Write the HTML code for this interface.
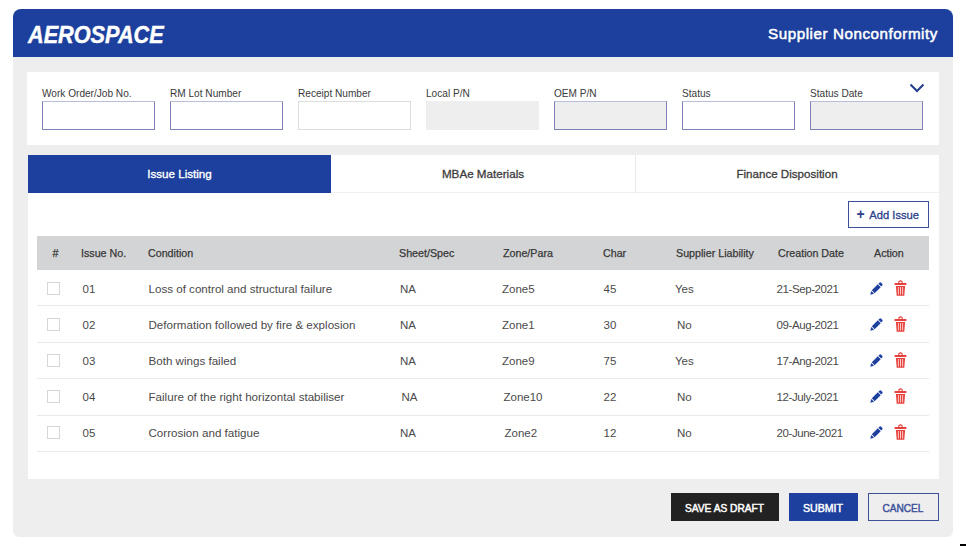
<!DOCTYPE html>
<html><head><meta charset="utf-8"><style>
html,body{margin:0;padding:0;width:966px;height:546px;overflow:hidden;background:#ffffff}
body{position:relative;font-family:"Liberation Sans",sans-serif}
.t{position:absolute;white-space:nowrap;line-height:1;-webkit-font-smoothing:antialiased}
</style></head><body>
<div style="position:absolute;left:13px;top:8.5px;width:940px;height:528.5px;background:#eeeeee;border-radius:8px 8px 6px 6px;overflow:hidden"><div style="position:absolute;left:0;top:0;width:940px;height:48px;background:#1d3f9d"></div></div>
<div class="t" style="left:27.6px;top:24.00px;font-size:23px;color:#ffffff;font-weight:bold;font-style:italic;letter-spacing:0px;-webkit-text-stroke:0.4px #fff;transform:scaleX(0.942);transform-origin:0 0;">AEROSPACE</div>
<div class="t" style="left:768px;top:26.00px;font-size:15.2px;color:#ffffff;font-weight:normal;font-style:normal;letter-spacing:0.55px;-webkit-text-stroke:0.5px #fff;">Supplier Nonconformity</div>
<div style="position:absolute;left:27px;top:72px;width:912px;height:73px;background:#ffffff"></div>
<div class="t" style="left:42px;top:89.00px;font-size:10.1px;color:#3a3a3a;font-weight:normal;font-style:normal;letter-spacing:0px;">Work Order/Job No.</div>
<div style="position:absolute;left:42px;top:101px;width:111px;height:27px;background:#fff;border:1px solid #7c82b4;border-top-color:#b9bedc"></div>
<div class="t" style="left:170px;top:89.00px;font-size:10.1px;color:#3a3a3a;font-weight:normal;font-style:normal;letter-spacing:0px;">RM Lot Number</div>
<div style="position:absolute;left:170px;top:101px;width:111px;height:27px;background:#fff;border:1px solid #7c82b4;border-top-color:#b9bedc"></div>
<div class="t" style="left:298px;top:89.00px;font-size:10.1px;color:#3a3a3a;font-weight:normal;font-style:normal;letter-spacing:0px;">Receipt Number</div>
<div style="position:absolute;left:298px;top:101px;width:111px;height:27px;background:#fff;border:1px solid #dddddd"></div>
<div class="t" style="left:426px;top:89.00px;font-size:10.1px;color:#3a3a3a;font-weight:normal;font-style:normal;letter-spacing:0px;">Local P/N</div>
<div style="position:absolute;left:426px;top:101px;width:111px;height:27px;background:#eeeeee;border:1px solid #eeeeee"></div>
<div class="t" style="left:554px;top:89.00px;font-size:10.1px;color:#3a3a3a;font-weight:normal;font-style:normal;letter-spacing:0px;">OEM P/N</div>
<div style="position:absolute;left:554px;top:101px;width:111px;height:27px;background:#eeeeee;border:1px solid #7c82b4;border-top-color:#b9bedc"></div>
<div class="t" style="left:682px;top:89.00px;font-size:10.1px;color:#3a3a3a;font-weight:normal;font-style:normal;letter-spacing:0px;">Status</div>
<div style="position:absolute;left:682px;top:101px;width:111px;height:27px;background:#fff;border:1px solid #7c82b4;border-top-color:#b9bedc"></div>
<div class="t" style="left:810px;top:89.00px;font-size:10.1px;color:#3a3a3a;font-weight:normal;font-style:normal;letter-spacing:0px;">Status Date</div>
<div style="position:absolute;left:810px;top:101px;width:111px;height:27px;background:#eeeeee;border:1px solid #7c82b4;border-top-color:#b9bedc"></div>
<svg style="position:absolute;left:909px;top:82px" width="16" height="12" viewBox="0 0 16 12"><path d="M1.5 2.5 L8 9 L14.5 2.5" fill="none" stroke="#1f3d8a" stroke-width="2"/></svg>
<div style="position:absolute;left:28px;top:155px;width:911px;height:323.5px;background:#ffffff"></div>
<div style="position:absolute;left:28px;top:155px;width:303px;height:38px;background:#1d3f9d"></div>
<div style="position:absolute;left:331px;top:192px;width:608px;height:1px;background:#f0f0f0"></div>
<div style="position:absolute;left:635px;top:155px;width:1px;height:38px;background:#eaeaea"></div>
<div class="t" style="left:29.5px;top:168.00px;font-size:11.6px;color:#ffffff;font-weight:normal;font-style:normal;letter-spacing:0px;width:300px;text-align:center;-webkit-text-stroke:0.35px #fff;">Issue Listing</div>
<div class="t" style="left:333.0px;top:168.00px;font-size:11.65px;color:#3c3c3c;font-weight:normal;font-style:normal;letter-spacing:0px;width:300px;text-align:center;-webkit-text-stroke:0.3px #3c3c3c;">MBAe Materials</div>
<div class="t" style="left:637.0px;top:168.00px;font-size:11.6px;color:#3c3c3c;font-weight:normal;font-style:normal;letter-spacing:0px;width:300px;text-align:center;-webkit-text-stroke:0.3px #3c3c3c;">Finance Disposition</div>
<div style="position:absolute;left:848px;top:201px;width:79px;height:25px;border:1px solid #3b4f9a"></div>
<div class="t" style="left:856.6px;top:207.00px;font-size:14px;color:#2b3f8c;font-weight:bold;font-style:normal;letter-spacing:0px;">+</div>
<div class="t" style="left:869.3px;top:210.00px;font-size:11.2px;color:#2b3f8c;font-weight:normal;font-style:normal;letter-spacing:0px;-webkit-text-stroke:0.3px #2b3f8c;">Add Issue</div>
<div style="position:absolute;left:37px;top:236px;width:892px;height:34px;background:#d3d4d5"></div>
<div class="t" style="left:52.6px;top:248.00px;font-size:10.7px;color:#383838;font-weight:normal;font-style:normal;letter-spacing:0px;-webkit-text-stroke:0.25px #383838;">#</div>
<div class="t" style="left:81px;top:248.00px;font-size:10.7px;color:#383838;font-weight:normal;font-style:normal;letter-spacing:0px;-webkit-text-stroke:0.25px #383838;">Issue No.</div>
<div class="t" style="left:148px;top:248.00px;font-size:10.7px;color:#383838;font-weight:normal;font-style:normal;letter-spacing:0px;-webkit-text-stroke:0.25px #383838;">Condition</div>
<div class="t" style="left:399px;top:248.00px;font-size:10.7px;color:#383838;font-weight:normal;font-style:normal;letter-spacing:0px;-webkit-text-stroke:0.25px #383838;">Sheet/Spec</div>
<div class="t" style="left:503px;top:248.00px;font-size:10.7px;color:#383838;font-weight:normal;font-style:normal;letter-spacing:0px;-webkit-text-stroke:0.25px #383838;">Zone/Para</div>
<div class="t" style="left:603px;top:248.00px;font-size:10.7px;color:#383838;font-weight:normal;font-style:normal;letter-spacing:0px;-webkit-text-stroke:0.25px #383838;">Char</div>
<div class="t" style="left:676px;top:248.00px;font-size:10.7px;color:#383838;font-weight:normal;font-style:normal;letter-spacing:0px;-webkit-text-stroke:0.25px #383838;">Supplier Liability</div>
<div class="t" style="left:778px;top:248.00px;font-size:10.7px;color:#383838;font-weight:normal;font-style:normal;letter-spacing:0px;-webkit-text-stroke:0.25px #383838;">Creation Date</div>
<div class="t" style="left:874px;top:248.00px;font-size:10.7px;color:#383838;font-weight:normal;font-style:normal;letter-spacing:0px;-webkit-text-stroke:0.25px #383838;">Action</div>
<div style="position:absolute;left:37px;top:305px;width:892px;height:1px;background:#e9e9e9"></div>
<div style="position:absolute;left:47px;top:282.00px;width:11px;height:11px;border:1px solid #d6d6d6;background:#fff"></div>
<div class="t" style="left:82.5px;top:284.00px;font-size:11.5px;color:#4a4a4a;font-weight:normal;font-style:normal;letter-spacing:0px;">01</div>
<div class="t" style="left:148.5px;top:283.00px;font-size:11.6px;color:#4a4a4a;font-weight:normal;font-style:normal;letter-spacing:0px;">Loss of control and structural failure</div>
<div class="t" style="left:400px;top:284.00px;font-size:11.5px;color:#4a4a4a;font-weight:normal;font-style:normal;letter-spacing:0px;">NA</div>
<div class="t" style="left:502px;top:284.00px;font-size:11.5px;color:#4a4a4a;font-weight:normal;font-style:normal;letter-spacing:0px;">Zone5</div>
<div class="t" style="left:603.5px;top:284.00px;font-size:11.5px;color:#4a4a4a;font-weight:normal;font-style:normal;letter-spacing:0px;">45</div>
<div class="t" style="left:675px;top:284.00px;font-size:11.5px;color:#4a4a4a;font-weight:normal;font-style:normal;letter-spacing:0px;">Yes</div>
<div class="t" style="left:776.5px;top:284.00px;font-size:11.5px;color:#4a4a4a;font-weight:normal;font-style:normal;letter-spacing:-0.4px;">21-Sep-2021</div>
<div style="position:absolute;left:867.7px;top:280.80px;width:16px;height:16px"><svg width="16" height="16" viewBox="0 0 16 16"><g transform="rotate(-45 8 8)" fill="#1d3f9d"><path d="M0 8 L3.3 6.0 L3.3 10.0 Z"/><rect x="4.1" y="6.0" width="8.5" height="4.0"/><path d="M13.4 6.0 H14.8 Q16.1 6.0 16.1 7.3 V8.7 Q16.1 10.0 14.8 10.0 H13.4 Z"/></g></svg></div>
<svg style="position:absolute;left:894px;top:280.00px" width="13" height="16" viewBox="0 0 13 16"><path fill="#e8413c" d="M4.2 3 Q4.2 0.3 6.5 0.3 Q8.8 0.3 8.8 3 Z M0.6 3h11.8v2.1H0.6z M1.9 5.9h9.2l-0.8 9.8H2.7z"/><path fill="#ffffff" d="M5.4 1.9 Q6.5 1.2 7.6 1.9 V3 H5.4z"/><path fill="#f7c9c7" d="M3.9 7h1v7.6h-1z M6.0 7h1v7.6h-1z M8.1 7h1v7.6h-1z"/></svg>
<div style="position:absolute;left:37px;top:342px;width:892px;height:1px;background:#e9e9e9"></div>
<div style="position:absolute;left:47px;top:318.00px;width:11px;height:11px;border:1px solid #d6d6d6;background:#fff"></div>
<div class="t" style="left:82.5px;top:320.00px;font-size:11.5px;color:#4a4a4a;font-weight:normal;font-style:normal;letter-spacing:0px;">02</div>
<div class="t" style="left:148.5px;top:319.00px;font-size:11.6px;color:#4a4a4a;font-weight:normal;font-style:normal;letter-spacing:0px;">Deformation followed by fire &amp; explosion</div>
<div class="t" style="left:400px;top:320.00px;font-size:11.5px;color:#4a4a4a;font-weight:normal;font-style:normal;letter-spacing:0px;">NA</div>
<div class="t" style="left:502px;top:320.00px;font-size:11.5px;color:#4a4a4a;font-weight:normal;font-style:normal;letter-spacing:0px;">Zone1</div>
<div class="t" style="left:603.5px;top:320.00px;font-size:11.5px;color:#4a4a4a;font-weight:normal;font-style:normal;letter-spacing:0px;">30</div>
<div class="t" style="left:677px;top:320.00px;font-size:11.5px;color:#4a4a4a;font-weight:normal;font-style:normal;letter-spacing:0px;">No</div>
<div class="t" style="left:776.5px;top:320.00px;font-size:11.5px;color:#4a4a4a;font-weight:normal;font-style:normal;letter-spacing:-0.4px;">09-Aug-2021</div>
<div style="position:absolute;left:867.7px;top:316.80px;width:16px;height:16px"><svg width="16" height="16" viewBox="0 0 16 16"><g transform="rotate(-45 8 8)" fill="#1d3f9d"><path d="M0 8 L3.3 6.0 L3.3 10.0 Z"/><rect x="4.1" y="6.0" width="8.5" height="4.0"/><path d="M13.4 6.0 H14.8 Q16.1 6.0 16.1 7.3 V8.7 Q16.1 10.0 14.8 10.0 H13.4 Z"/></g></svg></div>
<svg style="position:absolute;left:894px;top:316.00px" width="13" height="16" viewBox="0 0 13 16"><path fill="#e8413c" d="M4.2 3 Q4.2 0.3 6.5 0.3 Q8.8 0.3 8.8 3 Z M0.6 3h11.8v2.1H0.6z M1.9 5.9h9.2l-0.8 9.8H2.7z"/><path fill="#ffffff" d="M5.4 1.9 Q6.5 1.2 7.6 1.9 V3 H5.4z"/><path fill="#f7c9c7" d="M3.9 7h1v7.6h-1z M6.0 7h1v7.6h-1z M8.1 7h1v7.6h-1z"/></svg>
<div style="position:absolute;left:37px;top:378px;width:892px;height:1px;background:#e9e9e9"></div>
<div style="position:absolute;left:47px;top:354.00px;width:11px;height:11px;border:1px solid #d6d6d6;background:#fff"></div>
<div class="t" style="left:82.5px;top:356.00px;font-size:11.5px;color:#4a4a4a;font-weight:normal;font-style:normal;letter-spacing:0px;">03</div>
<div class="t" style="left:148.5px;top:355.00px;font-size:11.6px;color:#4a4a4a;font-weight:normal;font-style:normal;letter-spacing:0px;">Both wings failed</div>
<div class="t" style="left:400px;top:356.00px;font-size:11.5px;color:#4a4a4a;font-weight:normal;font-style:normal;letter-spacing:0px;">NA</div>
<div class="t" style="left:502px;top:356.00px;font-size:11.5px;color:#4a4a4a;font-weight:normal;font-style:normal;letter-spacing:0px;">Zone9</div>
<div class="t" style="left:603.5px;top:356.00px;font-size:11.5px;color:#4a4a4a;font-weight:normal;font-style:normal;letter-spacing:0px;">75</div>
<div class="t" style="left:675px;top:356.00px;font-size:11.5px;color:#4a4a4a;font-weight:normal;font-style:normal;letter-spacing:0px;">Yes</div>
<div class="t" style="left:776.5px;top:356.00px;font-size:11.5px;color:#4a4a4a;font-weight:normal;font-style:normal;letter-spacing:-0.4px;">17-Ang-2021</div>
<div style="position:absolute;left:867.7px;top:352.80px;width:16px;height:16px"><svg width="16" height="16" viewBox="0 0 16 16"><g transform="rotate(-45 8 8)" fill="#1d3f9d"><path d="M0 8 L3.3 6.0 L3.3 10.0 Z"/><rect x="4.1" y="6.0" width="8.5" height="4.0"/><path d="M13.4 6.0 H14.8 Q16.1 6.0 16.1 7.3 V8.7 Q16.1 10.0 14.8 10.0 H13.4 Z"/></g></svg></div>
<svg style="position:absolute;left:894px;top:352.00px" width="13" height="16" viewBox="0 0 13 16"><path fill="#e8413c" d="M4.2 3 Q4.2 0.3 6.5 0.3 Q8.8 0.3 8.8 3 Z M0.6 3h11.8v2.1H0.6z M1.9 5.9h9.2l-0.8 9.8H2.7z"/><path fill="#ffffff" d="M5.4 1.9 Q6.5 1.2 7.6 1.9 V3 H5.4z"/><path fill="#f7c9c7" d="M3.9 7h1v7.6h-1z M6.0 7h1v7.6h-1z M8.1 7h1v7.6h-1z"/></svg>
<div style="position:absolute;left:37px;top:415px;width:892px;height:1px;background:#e9e9e9"></div>
<div style="position:absolute;left:47px;top:390.00px;width:11px;height:11px;border:1px solid #d6d6d6;background:#fff"></div>
<div class="t" style="left:82.5px;top:392.00px;font-size:11.5px;color:#4a4a4a;font-weight:normal;font-style:normal;letter-spacing:0px;">04</div>
<div class="t" style="left:148.5px;top:391.00px;font-size:11.6px;color:#4a4a4a;font-weight:normal;font-style:normal;letter-spacing:0px;">Failure of the right horizontal stabiliser</div>
<div class="t" style="left:401.5px;top:392.00px;font-size:11.5px;color:#4a4a4a;font-weight:normal;font-style:normal;letter-spacing:0px;">NA</div>
<div class="t" style="left:503.5px;top:392.00px;font-size:11.5px;color:#4a4a4a;font-weight:normal;font-style:normal;letter-spacing:0px;">Zone10</div>
<div class="t" style="left:603.5px;top:392.00px;font-size:11.5px;color:#4a4a4a;font-weight:normal;font-style:normal;letter-spacing:0px;">22</div>
<div class="t" style="left:677px;top:392.00px;font-size:11.5px;color:#4a4a4a;font-weight:normal;font-style:normal;letter-spacing:0px;">No</div>
<div class="t" style="left:776.5px;top:392.00px;font-size:11.5px;color:#4a4a4a;font-weight:normal;font-style:normal;letter-spacing:-0.4px;">12-July-2021</div>
<div style="position:absolute;left:867.7px;top:388.80px;width:16px;height:16px"><svg width="16" height="16" viewBox="0 0 16 16"><g transform="rotate(-45 8 8)" fill="#1d3f9d"><path d="M0 8 L3.3 6.0 L3.3 10.0 Z"/><rect x="4.1" y="6.0" width="8.5" height="4.0"/><path d="M13.4 6.0 H14.8 Q16.1 6.0 16.1 7.3 V8.7 Q16.1 10.0 14.8 10.0 H13.4 Z"/></g></svg></div>
<svg style="position:absolute;left:894px;top:388.00px" width="13" height="16" viewBox="0 0 13 16"><path fill="#e8413c" d="M4.2 3 Q4.2 0.3 6.5 0.3 Q8.8 0.3 8.8 3 Z M0.6 3h11.8v2.1H0.6z M1.9 5.9h9.2l-0.8 9.8H2.7z"/><path fill="#ffffff" d="M5.4 1.9 Q6.5 1.2 7.6 1.9 V3 H5.4z"/><path fill="#f7c9c7" d="M3.9 7h1v7.6h-1z M6.0 7h1v7.6h-1z M8.1 7h1v7.6h-1z"/></svg>
<div style="position:absolute;left:37px;top:451px;width:892px;height:1px;background:#e9e9e9"></div>
<div style="position:absolute;left:47px;top:426.00px;width:11px;height:11px;border:1px solid #d6d6d6;background:#fff"></div>
<div class="t" style="left:82.5px;top:428.00px;font-size:11.5px;color:#4a4a4a;font-weight:normal;font-style:normal;letter-spacing:0px;">05</div>
<div class="t" style="left:148.5px;top:427.00px;font-size:11.6px;color:#4a4a4a;font-weight:normal;font-style:normal;letter-spacing:0px;">Corrosion and fatigue</div>
<div class="t" style="left:400px;top:428.00px;font-size:11.5px;color:#4a4a4a;font-weight:normal;font-style:normal;letter-spacing:0px;">NA</div>
<div class="t" style="left:504.5px;top:428.00px;font-size:11.5px;color:#4a4a4a;font-weight:normal;font-style:normal;letter-spacing:0px;">Zone2</div>
<div class="t" style="left:603.5px;top:428.00px;font-size:11.5px;color:#4a4a4a;font-weight:normal;font-style:normal;letter-spacing:0px;">12</div>
<div class="t" style="left:677px;top:428.00px;font-size:11.5px;color:#4a4a4a;font-weight:normal;font-style:normal;letter-spacing:0px;">No</div>
<div class="t" style="left:776.5px;top:428.00px;font-size:11.5px;color:#4a4a4a;font-weight:normal;font-style:normal;letter-spacing:-0.4px;">20-June-2021</div>
<div style="position:absolute;left:867.7px;top:424.80px;width:16px;height:16px"><svg width="16" height="16" viewBox="0 0 16 16"><g transform="rotate(-45 8 8)" fill="#1d3f9d"><path d="M0 8 L3.3 6.0 L3.3 10.0 Z"/><rect x="4.1" y="6.0" width="8.5" height="4.0"/><path d="M13.4 6.0 H14.8 Q16.1 6.0 16.1 7.3 V8.7 Q16.1 10.0 14.8 10.0 H13.4 Z"/></g></svg></div>
<svg style="position:absolute;left:894px;top:424.00px" width="13" height="16" viewBox="0 0 13 16"><path fill="#e8413c" d="M4.2 3 Q4.2 0.3 6.5 0.3 Q8.8 0.3 8.8 3 Z M0.6 3h11.8v2.1H0.6z M1.9 5.9h9.2l-0.8 9.8H2.7z"/><path fill="#ffffff" d="M5.4 1.9 Q6.5 1.2 7.6 1.9 V3 H5.4z"/><path fill="#f7c9c7" d="M3.9 7h1v7.6h-1z M6.0 7h1v7.6h-1z M8.1 7h1v7.6h-1z"/></svg>
<div style="position:absolute;left:671px;top:493px;width:108px;height:28px;background:#222222"></div>
<div class="t" style="left:670.5px;top:504.00px;font-size:10.2px;color:#ffffff;font-weight:normal;font-style:normal;letter-spacing:0px;width:108px;text-align:center;-webkit-text-stroke:0.45px #fff;">SAVE AS DRAFT</div>
<div style="position:absolute;left:789px;top:493px;width:69px;height:28px;background:#1d3f9d"></div>
<div class="t" style="left:788.5px;top:503.00px;font-size:10.6px;color:#ffffff;font-weight:normal;font-style:normal;letter-spacing:0px;width:69px;text-align:center;-webkit-text-stroke:0.45px #fff;">SUBMIT</div>
<div style="position:absolute;left:868px;top:493px;width:69px;height:26px;border:1px solid #3b4f9a"></div>
<div class="t" style="left:867.5px;top:504.00px;font-size:10.1px;color:#3b4f9a;font-weight:normal;font-style:normal;letter-spacing:0px;width:71px;text-align:center;-webkit-text-stroke:0.4px #3b4f9a;">CANCEL</div>
<div style="position:absolute;left:960px;top:544px;width:6px;height:2px;background:#000"></div>
</body></html>
